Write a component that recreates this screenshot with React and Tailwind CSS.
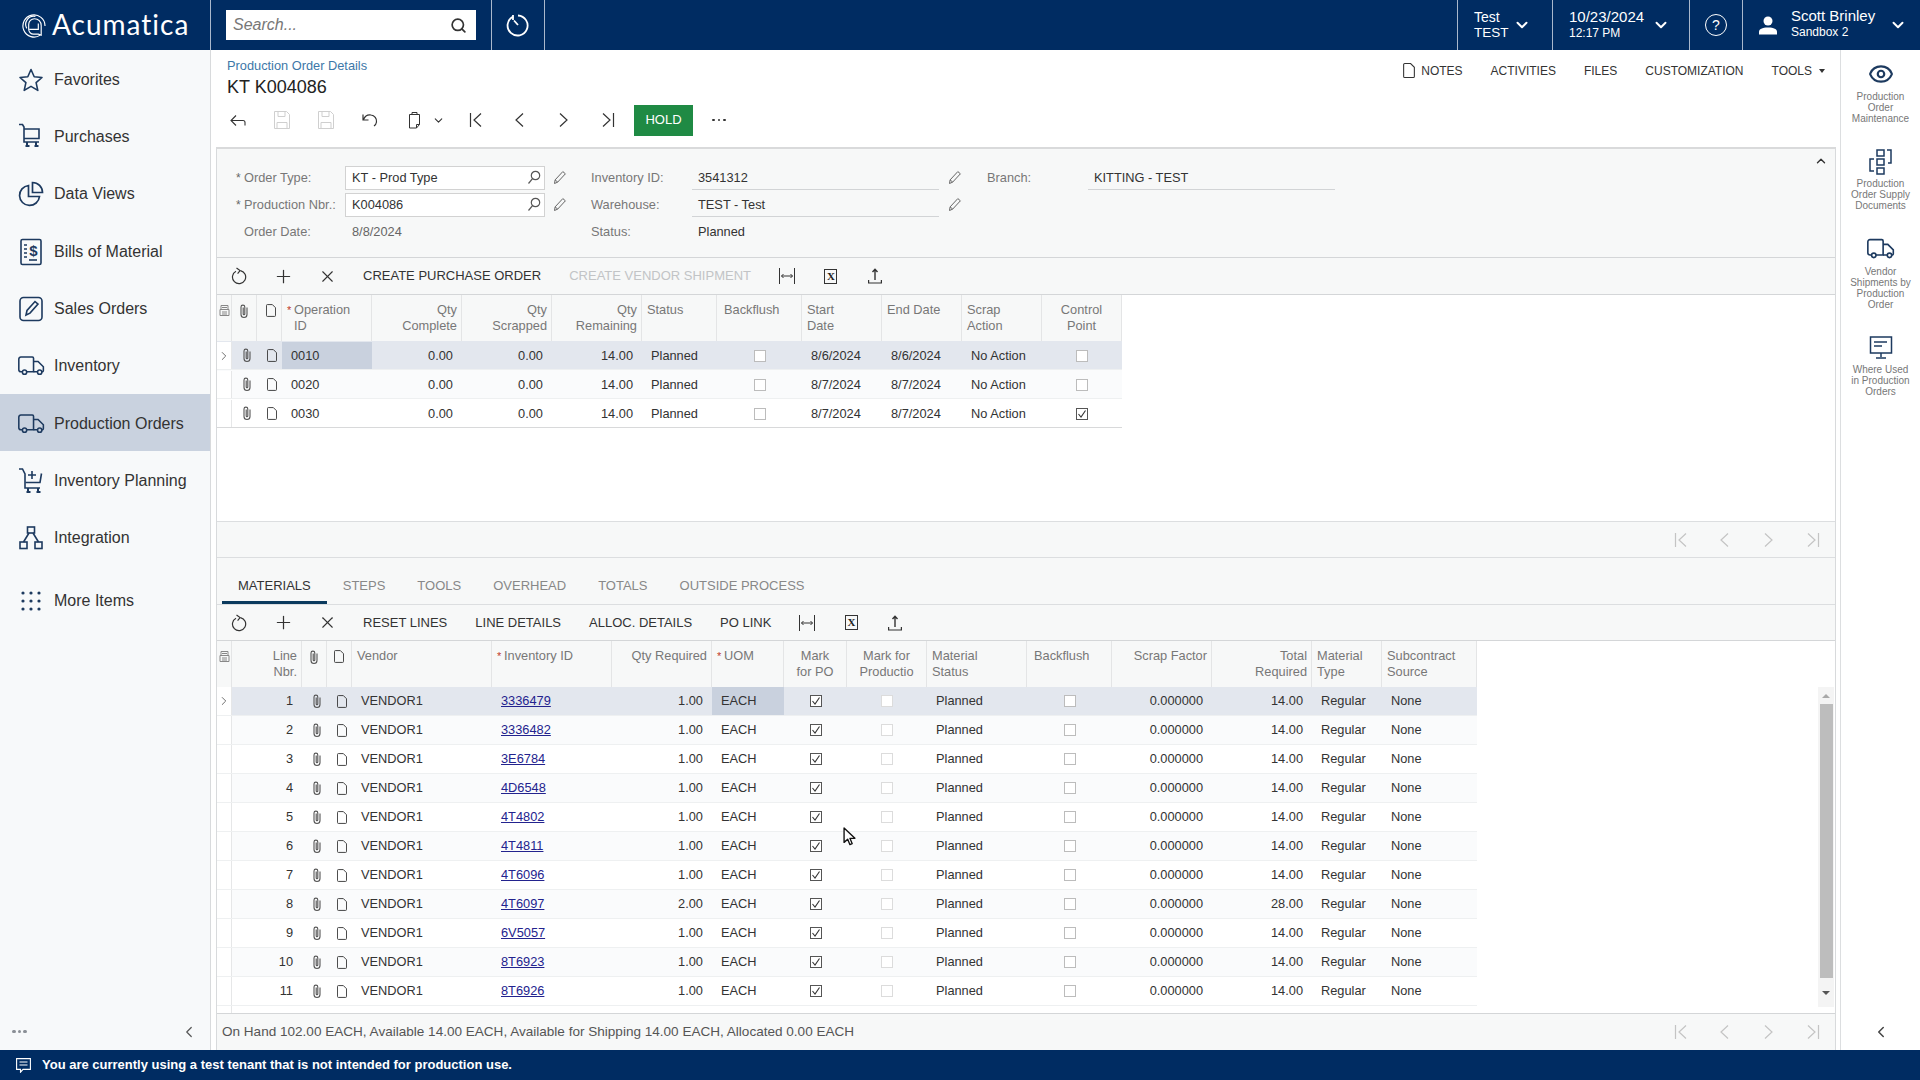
import React from "react";
import { Search, ChevronDown, ChevronLeft, ChevronRight, ChevronUp, Plus, X, Eye } from "lucide-react";

const navy = "#1d3a5f";

const Star = () => (
  <svg width="26" height="26" viewBox="0 0 26 26" fill="none" stroke={navy} strokeWidth="1.6" strokeLinejoin="round">
    <path d="M13 2.500l3.200 7.200 7.800.8-5.900 5.200 1.700 7.700-6.800-4-6.800 4 1.700-7.700L2 10.500l7.800-.8z" />
  </svg>
);
const Cart = () => (
  <svg width="26" height="28" viewBox="0 0 26 28" fill="none" stroke={navy} strokeWidth="1.6">
    <path d="M1 1.500h3.500l1.500 2.500V19h15M6 6h15v9.500H6" />
    <path d="M9 19v4M18 19v4M7.500 23h4M16.500 23h4" strokeWidth="2" />
  </svg>
);
const Pie = () => (
  <svg width="26" height="26" viewBox="0 0 26 26" fill="none" stroke={navy} strokeWidth="1.7">
    <path d="M10.500 4.500a10 10 0 1 0 11 11h-11z" />
    <path d="M14.500 1.500a10 10 0 0 1 10 10h-10z" />
  </svg>
);
const Bill = () => (
  <svg width="26" height="28" viewBox="0 0 26 28" fill="none" stroke={navy} strokeWidth="1.6">
    <rect x="3" y="1.500" width="20" height="25" rx="1.500" />
    <path d="M6 7h3M6 11h3M6 15h3M6 19h3" />
    <text x="15.500" y="18" textAnchor="middle" fontSize="15" fontWeight="700" fill={navy} stroke="none" fontFamily="Liberation Sans">$</text>
    <path d="M11 22h8" />
  </svg>
);
const Sales = () => (
  <svg width="26" height="28" viewBox="0 0 26 28" fill="none" stroke={navy} strokeWidth="1.6">
    <rect x="2" y="2.500" width="22" height="23" rx="3.500" />
    <path d="M8 20l1-4.500 8-9 3 2.600-8 9z" />
  </svg>
);
const Truck = ({ c = navy, w = 27, h = 20 }) => (
  <svg width={w} height={h} viewBox="0 0 33 24" fill="none" stroke={c} strokeWidth="1.900">
    <path d="M5.500 19H3.500a2.500 2.500 0 0 1-2.500-2.500V3.500A2.500 2.500 0 0 1 3.500 1h14a1.500 1.500 0 0 1 1.500 1.500V19H10.500" />
    <path d="M19 6.500h5.500l6.500 6.500v4.500a1.500 1.500 0 0 1-1.500 1.500H29M24 19h-5" />
    <circle cx="8" cy="19.500" r="2.600" />
    <circle cx="26.500" cy="19.500" r="2.600" />
  </svg>
);
const CartPlus = () => (
  <svg width="26" height="26" viewBox="0 0 26 26" fill="none" stroke={navy} strokeWidth="1.6">
    <path d="M1 1h3.500l2.500 5v14h15" />
    <path d="M7.500 14.500h14.500l1.500-9" />
    <path d="M14 3v8M10 7h8" />
    <path d="M10 20v4M20 20v4M8.500 24h4M18.500 24h4" strokeWidth="2" />
  </svg>
);
const Hier = () => (
  <svg width="26" height="26" viewBox="0 0 26 26" fill="none" stroke={navy} strokeWidth="1.6">
    <rect x="9.500" y="2" width="7" height="6" />
    <rect x="2" y="17" width="7" height="6.500" />
    <rect x="17" y="17" width="7" height="6.500" />
    <path d="M11 8l-5.500 9M15 8l5.500 9" />
  </svg>
);
const Dots = () => (
  <svg width="20" height="20" viewBox="0 0 20 20" fill={navy}>
    {[2, 10, 18].map((y) => [2, 10, 18].map((x) => <circle key={x + "-" + y} cx={x} cy={y} r="1.600" />))}
  </svg>
);
const Clip = () => (
  <svg width="10" height="15" viewBox="0 0 10 15" fill="none" stroke="#555" strokeWidth="1.100">
    <path d="M8 3.500V10.500a3 3 0 0 1-6 0V3a1.900 1.900 0 0 1 3.800 0v7a.8.8 0 0 1-1.600 0V3.500" />
  </svg>
);
const Doc = ({ c = "#333", w = 10, h = 13 }) => (
  <svg width={w} height={h} viewBox="0 0 11 14" fill="none" stroke={c} strokeWidth="1">
    <path d="M1.500.5h5.500l3.500 3.500v8.500a1 1 0 0 1-1 1H1.500a1 1 0 0 1-1-1V1.500a1 1 0 0 1 1-1z" />
  </svg>
);
const ListIco = () => (
  <svg width="11" height="13" viewBox="0 0 11 13" fill="none" stroke="#888" strokeWidth="1">
    <path d="M2 1.500h7v4H2zM1 5.500h9v6H1zM3 3.500h5M3 8h5M3 10h5" />
  </svg>
);
const Pencil = () => (
  <svg width="14" height="15" viewBox="0 0 14 15" fill="none" stroke="#666" strokeWidth="1">
    <path d="M1.500 13.500l.6-3.600L9.800 1.600l2.600 2.200-7.700 8.300zM2.100 9.900l2.600 2.200" />
  </svg>
);
const MiniSearch = () => (
  <svg width="14" height="15" viewBox="0 0 14 15" fill="none" stroke="#555" strokeWidth="1.200">
    <circle cx="8.500" cy="5.500" r="4.200" />
    <path d="M5.500 8.600L1.500 13.500" />
  </svg>
);
const Refresh = () => (
  <svg width="16" height="18" viewBox="0 0 16 18" fill="none" stroke="#333" strokeWidth="1.200">
    <path d="M5 4.200a6.600 6.600 0 1 0 4.500-.6" />
    <path d="M5.500 1l3.600 2.600-2.500 3" />
  </svg>
);
const Fit = ({ w = 16 }) => (
  <svg width={w} height="16" viewBox="0 0 16 16" fill="none" stroke="#333" strokeWidth="1">
    <path d="M.5 0v16M15.500 0v16M2.500 8h11M4.500 6l-2 2 2 2M11.500 6l2 2-2 2" />
  </svg>
);
const Excel = () => (
  <div className="w-[13px] h-[15px] border border-[#333] flex items-center justify-center text-[11px] leading-none font-bold text-[#222] font-['Liberation_Serif',serif]">X</div>
);
const Upload = () => (
  <svg width="14" height="16" viewBox="0 0 14 16" fill="none" stroke="#333" strokeWidth="1.200">
    <path d="M7 12V1.500M4.500 4L7 1.200 9.500 4" strokeWidth="1.400" />
    <path d="M.6 12v3h12.800v-3" />
  </svg>
);
const PagerIcon = ({ kind }) => {
  const d = {
    first: "M1.500 1v14M12 1.500L5 8l7 6.500",
    prev: "M10 1.500L3 8l7 6.500",
    next: "M3 1.500L10 8l-7 6.500",
    last: "M12.500 1v14M2 1.500L9 8l-7 6.500",
  }[kind];
  return (
    <svg width="14" height="16" viewBox="0 0 14 16" fill="none" stroke="currentColor" strokeWidth="1.200"><path d={d} /></svg>
  );
};
const Pager = () => (
  <div className="flex ml-auto text-[#c4c4c4]">
    {["first", "prev", "next", "last"].map((k) => (
      <div key={k} className="w-[44px] flex items-center justify-center"><PagerIcon kind={k} /></div>
    ))}
  </div>
);

const Box = ({ checked, soft }) => (
  <div className={"w-[12px] h-[12px] border bg-white flex items-center justify-center " + (checked ? "border-[#555]" : soft ? "border-[#dcdcdc]" : "border-[#bcbcbc]")}>
    {checked && (
      <svg width="10" height="10" viewBox="0 0 10 10" fill="none" stroke="#333" strokeWidth="1.100"><path d="M1.500 5l2.500 3 4.500-6.500" /></svg>
    )}
  </div>
);

const Logo = () => (
  <svg width="25" height="25" viewBox="0 0 26 26" fill="none" stroke="#fff" strokeWidth="1.200">
    <path d="M20 23a11.500 11.500 0 1 1 5-9.500" />
    <path d="M6 16a8.500 8.500 0 0 1 9-12.500" />
    <path d="M8 15v-3a6 6 0 0 1 6-6c4 0 7 3 7 7v10l-3-1H13a5 5 0 0 1-5-5z" />
    <path d="M8.500 17H18V11" />
  </svg>
);

const NAV = [
  ["Favorites", <Star />],
  ["Purchases", <Cart />],
  ["Data Views", <Pie />],
  ["Bills of Material", <Bill />],
  ["Sales Orders", <Sales />],
  ["Inventory", <Truck />],
  ["Production Orders", <Truck />, true],
  ["Inventory Planning", <CartPlus />],
  ["Integration", <Hier />],
];

const Sidebar = () => (
  <aside className="w-[211px] shrink-0 border-r border-[#d8dadc] bg-[#f7f9fa] flex flex-col">
    {NAV.map(([t, ic, active]) => (
      <div key={t} className={"flex items-center h-[57.33px] pl-[18px] pt-[2px] " + (active ? "bg-[#c9d2df]" : "")}>
        <div className="w-[36px] flex items-center">{ic}</div>
        <span className="text-[16px] text-[#333]">{t}</span>
      </div>
    ))}
    <div className="flex items-center h-[57.33px] pl-[18px] mt-[5px] pt-[2px]">
      <div className="w-[36px] pl-[3px] flex items-center"><Dots /></div>
      <span className="text-[16px] text-[#333]">More Items</span>
    </div>
    <div className="mt-auto h-[37px] flex items-center justify-between pl-[12px] pr-[12px]">
      <div className="flex gap-[2px]">
        {[0, 1, 2].map((i) => <div key={i} className="w-[3.5px] h-[3.5px] rounded-full bg-[#8a8f96]" />)}
      </div>
      <ChevronLeft size={18} strokeWidth={1.6} className="text-[#555]" />
    </div>
  </aside>
);

const TopBar = () => (
  <header className="h-[50px] shrink-0 bg-[#002c62] flex text-white">
    <div className="w-[211px] shrink-0 border-r border-[#a9b8cc] flex items-center pl-[21px]">
      <Logo />
      <span className="ml-[6px] -mt-[2px] text-[28px] tracking-[1px] leading-none font-['Lato',sans-serif]">Acumatica</span>
    </div>
    <div className="w-[281px] border-r border-[#a9b8cc] flex items-center pl-[15px]">
      <div className="w-[250px] h-[30px] bg-white flex items-center justify-between px-[7px]">
        <span className="text-[16px] italic text-[#777]">Search...</span>
        <Search size={17} strokeWidth={2.4} className="text-[#333] -translate-x-[2px]" />
      </div>
    </div>
    <div className="w-[53px] border-r border-[#a9b8cc] flex items-center justify-center">
      <svg width="24" height="24" viewBox="0 0 24 24" fill="none" stroke="#fff" strokeWidth="1.800">
        <path d="M7 3.600a10 10 0 1 0 5-1.100" />
        <path d="M7 2v5h0M12 12L8 7.500" />
      </svg>
    </div>
    <div className="ml-auto flex">
      <div className="w-[95px] border-l border-[#a9b8cc] flex items-center pl-[16px]">
        <div className="w-[42px]">
          <div className="text-[14px] leading-[15px]">Test</div>
          <div className="text-[13.5px] leading-[16px]">TEST</div>
        </div>
        <ChevronDown size={18} strokeWidth={2.6} className="-ml-[3px]" />
      </div>
      <div className="w-[137px] border-l border-[#a9b8cc] flex items-center pl-[16px]">
        <div className="w-[84px]">
          <div className="text-[15px] leading-[17px]">10/23/2024</div>
          <div className="text-[12px] leading-[17px]">12:17 PM</div>
        </div>
        <ChevronDown size={18} strokeWidth={2.6} className="-ml-[1px]" />
      </div>
      <div className="w-[53px] border-l border-[#a9b8cc] flex items-center justify-center">
        <div className="w-[22px] h-[22px] rounded-full border-[1.5px] border-white flex items-center justify-center text-[14px] leading-none">?</div>
      </div>
      <div className="w-[178px] border-l border-[#a9b8cc] flex items-center pl-[15px]">
        <svg width="20" height="19" viewBox="0 0 20 19" fill="#fff">
          <circle cx="10" cy="5" r="4.500" />
          <path d="M1 18.500v-2.500c0-3 3-4.500 9-4.500s9 1.500 9 4.500v2.500z" />
        </svg>
        <div className="ml-[13px] w-[95px] -mt-[2px]">
          <div className="text-[15px] leading-[17px] whitespace-nowrap">Scott Brinley</div>
          <div className="text-[12px] leading-[17px]">Sandbox 2</div>
        </div>
        <ChevronDown size={18} strokeWidth={2.6} className="ml-[3px]" />
      </div>
    </div>
  </header>
);

const IconBtn = ({ children, w = "w-[44px]" }) => (
  <div className={w + " h-[44px] flex items-center justify-center shrink-0 text-[#333]"}>{children}</div>
);

const MainHeader = () => (
  <div className="h-[97px] shrink-0 flex flex-col">
    <div className="flex justify-between h-[48px] pt-[8px]">
      <div className="pl-[16px]">
        <div className="text-[12.8px] leading-[16px] text-[#3d77a8]">Production Order Details</div>
        <div className="text-[18px] leading-[22px] mt-[2px] text-[#222]">KT K004086</div>
      </div>
      <div className="flex items-center h-[16px] mt-[4.5px] gap-[28px] pr-[15px] text-[12px] text-[#333]">
        <div className="flex items-center gap-[6px]"><Doc w={12} h={15} /><span>NOTES</span></div>
        <span>ACTIVITIES</span>
        <span>FILES</span>
        <span>CUSTOMIZATION</span>
        <div className="flex items-center gap-[7px]"><span>TOOLS</span><div className="w-0 h-0 border-x-[3.5px] border-x-transparent border-t-[4px] border-t-[#333]" /></div>
      </div>
    </div>
    <div className="flex items-center pl-[5px] h-[44px]">
      <IconBtn><svg width="16" height="14" viewBox="0 0 16 14" fill="none" stroke="#333" strokeWidth="1.100"><path d="M15 12.500V9.500a2 2 0 0 0-2-2H1.500M6 2.500L1 7.500l5 5" /></svg></IconBtn>
      <IconBtn><svg width="16" height="18" viewBox="0 0 16 18" fill="none" stroke="#cfcfcf" strokeWidth="1"><path d="M.5.5h12l3 3v14H.5zM4 .5v5h7v-5M3 17.500v-6h10v6" /></svg></IconBtn>
      <IconBtn><svg width="16" height="18" viewBox="0 0 16 18" fill="none" stroke="#cfcfcf" strokeWidth="1"><path d="M.5.5h12l3 3v14H.5zM4 .5v5h7v-5M3 17.500v-6h10v6" /></svg></IconBtn>
      <IconBtn><svg width="16" height="14" viewBox="0 0 16 14" fill="none" stroke="#333" strokeWidth="1.200"><path d="M1 1.500V7h5.500M1.500 6.500C3 3 6 1.500 9 2c3.500.5 6 3.500 5.500 7-.2 1.500-1 3-2.500 4" /></svg></IconBtn>
      <IconBtn><svg width="13" height="18" viewBox="0 0 13 18" fill="none" stroke="#333" strokeWidth="1"><path d="M1.500 3.500h10v10l-3 3.500h-7zM8.500 17v-3.500h3M4 3.500V1.500h5v2" /></svg></IconBtn>
      <div className="w-[18px] -ml-[7px] mr-[7px] flex justify-center"><ChevronDown size={13} strokeWidth={2} className="text-[#333]" /></div>
      {["first", "prev", "next", "last"].map((k) => <IconBtn key={k}><PagerIcon kind={k} /></IconBtn>)}
      <div className="ml-[4px] w-[59px] h-[31px] bg-[#1f8a44] text-white text-[13px] flex items-center justify-center">HOLD</div>
      <div className="ml-[4px] w-[44px] flex justify-center gap-[3px]">
        {[0, 1, 2].map((i) => <div key={i} className="w-[2.5px] h-[2.5px] rounded-full bg-[#333]" />)}
      </div>
    </div>
  </div>
);

const Label = ({ req, children, w }) => (
  <div className={w + " flex items-center text-[#777] text-[12.8px] shrink-0"}>
    {req !== undefined && <span className="w-[8px] -ml-[1px] text-[#666] text-[12px] leading-none">{req ? "*" : ""}</span>}
    <span>{children}</span>
  </div>
);

const SelectorInput = ({ value }) => (
  <>
    <div className="w-[200px] h-[24px] bg-white border border-[#d2d2d2] flex items-center justify-between pl-[6px] pr-[3px] text-[12.8px] text-[#333]">
      <span>{value}</span>
      <MiniSearch />
    </div>
    <div className="ml-[8px]"><Pencil /></div>
  </>
);

const Under = ({ children }) => (
  <div className="w-[247px] h-[24px] pt-[2px] border-b border-[#d2d4d6] flex items-center pl-[6px] text-[12.8px] text-[#333]">{children}</div>
);

const FormPanel = () => (
  <div className="relative h-[111px] shrink-0 bg-[#f7f8f8] border-t-2 border-t-[#d9dadb] border-b border-b-[#d4d6d8] pt-[15px] flex">
    <div className="w-[374px] pl-[20px] shrink-0">
      <div className="flex items-center h-[27px]"><Label req w="w-[108px]">Order Type:</Label><SelectorInput value="KT - Prod Type" /></div>
      <div className="flex items-center h-[27px]"><Label req w="w-[108px]">Production Nbr.:</Label><SelectorInput value="K004086" /></div>
      <div className="flex items-center h-[27px]"><Label req={false} w="w-[108px]">Order Date:</Label><span className="pl-[7px] text-[12.8px] text-[#666]">8/8/2024</span></div>
    </div>
    <div className="w-[396px] shrink-0">
      <div className="flex items-center h-[27px]"><Label w="w-[101px]">Inventory ID:</Label><Under>3541312</Under><div className="ml-[9px]"><Pencil /></div></div>
      <div className="flex items-center h-[27px]"><Label w="w-[101px]">Warehouse:</Label><Under>TEST - Test</Under><div className="ml-[9px]"><Pencil /></div></div>
      <div className="flex items-center h-[27px]"><Label w="w-[101px]">Status:</Label><span className="pl-[6px] text-[12.8px] text-[#333]">Planned</span></div>
    </div>
    <div className="w-[396px] shrink-0">
      <div className="flex items-center h-[27px]"><Label w="w-[101px]">Branch:</Label><Under>KITTING - TEST</Under></div>
    </div>
    <ChevronUp size={14} strokeWidth={2.4} className="absolute right-[7px] top-[5px] text-[#333]" />
  </div>
);

const GridToolbar = ({ actions, h = "h-[37px]" }) => (
  <div className={h + " shrink-0 bg-[#f7f8f8] border-b border-[#d4d6d8] flex items-center text-[13px] text-[#333]"}>
    <IconBtn><Refresh /></IconBtn>
    <IconBtn><Plus size={21} strokeWidth={1.4} /></IconBtn>
    <IconBtn><X size={19} strokeWidth={1.4} /></IconBtn>
    {actions.map(([t, dis]) => (
      <div key={t} className={"px-[14px] whitespace-nowrap " + (dis ? "text-[#c2c4c6]" : "")}>{t}</div>
    ))}
    <IconBtn><Fit /></IconBtn>
    <IconBtn><Excel /></IconBtn>
    <IconBtn><Upload /></IconBtn>
  </div>
);

const Th = ({ w, align = "l", req, pad = "", children }) => (
  <div className={w + " shrink-0 border-r border-[#e4e5e6] pt-[7px] text-[12.8px] leading-[16px] text-[#777] whitespace-pre-line overflow-hidden " +
    (align === "r" ? "text-right pr-[4px]" : align === "c" ? "text-center" : "pl-[5px] flex ") + " " + pad}>
    {req && <span className="w-[7px] shrink-0 text-[#c0392b] text-[11px]">*</span>}
    <span>{children}</span>
  </div>
);

const Td = ({ w, align = "l", bg = "", children }) => (
  <div className={w + " shrink-0 h-full flex items-center overflow-hidden whitespace-nowrap " + bg + " " +
    (align === "r" ? "justify-end pr-[9px]" : align === "c" ? "justify-center" : "pl-[9px]")}>{children}</div>
);

const Ico = ({ w, children }) => (
  <div className={w + " shrink-0 h-full flex items-center justify-center pl-[4px]"}>{children}</div>
);

const Strip = ({ arrow }) => (
  <div className="w-[15px] shrink-0 h-full bg-white border-r border-[#e6e7e8] flex items-center justify-center">
    {arrow && <ChevronRight size={14} strokeWidth={1.6} className="text-[#666]" />}
  </div>
);

const OPS = [
  ["0010", "8/6/2024", "8/6/2024", false],
  ["0020", "8/7/2024", "8/7/2024", false],
  ["0030", "8/7/2024", "8/7/2024", true],
];

const UpperGrid = () => (
  <div className="h-[226px] shrink-0 flex flex-col bg-white">
    <div className="flex h-[46px] w-[905px] bg-[#f7f8f8] shrink-0">
      <div className="w-[15px] shrink-0 border-r border-[#e4e5e6] flex justify-center pt-[9px]"><ListIco /></div>
      <div className="w-[25px] shrink-0 border-r border-[#e4e5e6] flex justify-center pt-[9px]"><Clip /></div>
      <div className="w-[25px] shrink-0 border-r border-[#e4e5e6] flex justify-center pt-[9px] pl-[3px]"><Doc /></div>
      <Th w="w-[90px]" req>{"Operation\nID"}</Th>
      <Th w="w-[90px]" align="r">{"Qty\nComplete"}</Th>
      <Th w="w-[90px]" align="r">{"Qty\nScrapped"}</Th>
      <Th w="w-[90px]" align="r">{"Qty\nRemaining"}</Th>
      <Th w="w-[75px]">Status</Th>
      <Th w="w-[85px]" pad="pl-[7px]">Backflush</Th>
      <Th w="w-[80px]">{"Start\nDate"}</Th>
      <Th w="w-[80px]">End Date</Th>
      <Th w="w-[80px]">{"Scrap\nAction"}</Th>
      <Th w="w-[80px]" align="c">{"Control\nPoint"}</Th>
    </div>
    {OPS.map(([id, s, e, cp], i) => (
      <div key={id} className={"flex h-[29px] pt-[1px] w-[905px] text-[12.8px] text-[#333] border-b " + (i === 2 ? "border-[#d8d9da] " : "border-[#eef0f1] ") + (i === 0 ? "bg-[#e3e7ee]" : i === 1 ? "bg-[#fafbfc]" : "bg-white")}>
        <Strip arrow={i === 0} />
        <Ico w="w-[25px]"><Clip /></Ico>
        <Ico w="w-[25px]"><Doc /></Ico>
        <Td w="w-[90px]" bg={i === 0 ? "bg-[#c9d1de]" : ""}>{id}</Td>
        <Td w="w-[90px]" align="r">0.00</Td>
        <Td w="w-[90px]" align="r">0.00</Td>
        <Td w="w-[90px]" align="r">14.00</Td>
        <Td w="w-[75px]">Planned</Td>
        <Td w="w-[85px]" align="c"><Box /></Td>
        <Td w="w-[80px]">{s}</Td>
        <Td w="w-[80px]">{e}</Td>
        <Td w="w-[80px]">No Action</Td>
        <Td w="w-[80px]" align="c"><Box checked={cp} /></Td>
      </div>
    ))}
  </div>
);

const MATS = ["3336479", "3336482", "3E6784", "4D6548", "4T4802", "4T4811", "4T6096", "4T6097", "6V5057", "8T6923", "8T6926"];

const LowerGrid = () => (
  <div className="h-[372px] shrink-0 flex bg-white">
    <div className="w-[1260px] shrink-0 flex flex-col">
      <div className="flex h-[46px] bg-[#f7f8f8] shrink-0">
        <div className="w-[15px] shrink-0 border-r border-[#e4e5e6] flex justify-center pt-[9px]"><ListIco /></div>
        <Th w="w-[70px]" align="r">{"Line\nNbr."}</Th>
        <div className="w-[25px] shrink-0 border-r border-[#e4e5e6] flex justify-center pt-[9px]"><Clip /></div>
        <div className="w-[25px] shrink-0 border-r border-[#e4e5e6] flex justify-center pt-[9px]"><Doc /></div>
        <Th w="w-[140px]">Vendor</Th>
        <Th w="w-[120px]" req>Inventory ID</Th>
        <Th w="w-[100px]" align="r">Qty Required</Th>
        <Th w="w-[72px]" req>UOM</Th>
        <Th w="w-[63px]" align="c">{"Mark\nfor PO"}</Th>
        <Th w="w-[80px]" align="c">{"Mark for\nProductio"}</Th>
        <Th w="w-[100px]" pad="pl-[4px]">{"Material\nStatus"}</Th>
        <Th w="w-[85px]" pad="pl-[7px]">Backflush</Th>
        <Th w="w-[100px]" align="r">Scrap Factor</Th>
        <Th w="w-[100px]" align="r">{"Total\nRequired"}</Th>
        <Th w="w-[70px]" pad="pl-[4px]">{"Material\nType"}</Th>
        <Th w="w-[95px]">{"Subcontract\nSource"}</Th>
      </div>
      {MATS.map((m, i) => (
        <div key={m} className={"flex h-[29px] shrink-0 text-[12.8px] text-[#333] border-b border-[#eef0f1] " + (i === 0 ? "bg-[#e3e7ee]" : i % 2 ? "bg-[#fafbfc]" : "bg-white")}>
          <Strip arrow={i === 0} />
          <Td w="w-[70px]" align="r">{i + 1}</Td>
          <Ico w="w-[25px]"><Clip /></Ico>
          <Ico w="w-[25px]"><Doc /></Ico>
          <Td w="w-[140px]">VENDOR1</Td>
          <Td w="w-[120px]"><span className="text-[#23238e] underline">{m}</span></Td>
          <Td w="w-[100px]" align="r">{i === 7 ? "2.00" : "1.00"}</Td>
          <Td w="w-[72px]" bg={i === 0 ? "bg-[#c9d1de]" : ""}>EACH</Td>
          <Td w="w-[63px]" align="c"><Box checked /></Td>
          <Td w="w-[80px]" align="c"><Box soft /></Td>
          <Td w="w-[100px]">Planned</Td>
          <Td w="w-[85px]" align="c"><Box /></Td>
          <Td w="w-[100px]" align="r">0.000000</Td>
          <Td w="w-[100px]" align="r">{i === 7 ? "28.00" : "14.00"}</Td>
          <Td w="w-[70px]">Regular</Td>
          <Td w="w-[95px]">None</Td>
        </div>
      ))}
      <div className="w-[15px] flex-1 border-r border-[#e6e7e8]" />
    </div>
    <div className="ml-auto mr-[1px] mt-[46px] w-[16px] h-[320px] bg-[#f4f4f4] flex flex-col items-center">
      <div className="h-[17px] flex items-center justify-center">
        <div className="w-0 h-0 border-x-[4px] border-x-transparent border-b-[4px] border-b-[#a8a8a8]" />
      </div>
      <div className="w-[13px] h-[274px] bg-[#bdbdbd]" />
      <div className="flex-1 flex items-center justify-center">
        <div className="w-0 h-0 border-x-[4px] border-x-transparent border-t-[4px] border-t-[#555]" />
      </div>
    </div>
  </div>
);

const TABS = ["MATERIALS", "STEPS", "TOOLS", "OVERHEAD", "TOTALS", "OUTSIDE PROCESS"];

const Tabs = () => (
  <div className="h-[47px] shrink-0 bg-[#f7f8f8] border-b border-[#dcdee0] flex pl-[5px] text-[13px]">
    {TABS.map((t, i) => (
      <div key={t} className={"px-[16px] pt-[12px] flex items-center border-b-[3px] " + (i === 0 ? "border-[#0b3a5e] text-[#333]" : "border-transparent text-[#888]")}>{t}</div>
    ))}
  </div>
);

const RAIL = [
  ["Production\nOrder\nMaintenance", <Eye size={26} strokeWidth={2} color={navy} />],
  ["Production\nOrder Supply\nDocuments", (
    <svg width="24" height="26" viewBox="0 0 24 26" fill="none" stroke={navy} strokeWidth="1.500">
      <rect x="8" y="1" width="7" height="6" /><rect x="8" y="10" width="7" height="6" /><rect x="8" y="19" width="7" height="6" />
      <path d="M18 1h4v13h-3M5 10H1v12h4" />
    </svg>
  )],
  ["Vendor\nShipments by\nProduction\nOrder", <Truck w={28} h={22} />],
  ["Where Used\nin Production\nOrders", (
    <svg width="24" height="24" viewBox="0 0 24 24" fill="none" stroke={navy} strokeWidth="1.500">
      <rect x="1.500" y="1" width="21" height="16" />
      <path d="M5 6h13M5 10h8M12 17v4M7 22h10" />
    </svg>
  )],
];

const RightRail = () => (
  <aside className="w-[80px] shrink-0 border-l border-[#dcdee0] bg-white flex flex-col">
    <div className="pt-[10px] flex flex-col gap-[24px]">
      {RAIL.map(([t, ic]) => (
        <div key={t} className="flex flex-col items-center">
          <div className="h-[28px] flex items-center justify-center">{ic}</div>
          <div className="mt-[2.5px] text-[10px] leading-[11px] text-[#777] text-center whitespace-pre-line">{t}</div>
        </div>
      ))}
    </div>
    <div className="mt-auto h-[37px] flex items-center justify-center">
      <ChevronLeft size={18} strokeWidth={2} className="text-[#444]" />
    </div>
  </aside>
);

export default function App() {
  return (
    <div className="relative w-[1920px] h-[1080px] overflow-hidden flex flex-col bg-white font-['Liberation_Sans',Arial,sans-serif]">
      <TopBar />
      <div className="h-[1000px] flex">
        <Sidebar />
        <main className="flex-1 min-w-0 flex flex-col">
          <MainHeader />
          <div className="ml-[5px] mr-[4px] flex-1 border-x border-[#d8dadc] flex flex-col">
            <FormPanel />
            <GridToolbar actions={[["CREATE PURCHASE ORDER"], ["CREATE VENDOR SHIPMENT", true]]} />
            <UpperGrid />
            <div className="h-[37px] shrink-0 bg-[#f7f8f8] border-y border-[#dcdee0] flex"><Pager /></div>
            <Tabs />
            <GridToolbar actions={[["RESET LINES"], ["LINE DETAILS"], ["ALLOC. DETAILS"], ["PO LINK"]]} h="h-[36px]" />
            <LowerGrid />
            <div className="flex-1 bg-[#f7f8f8] border-t border-[#d4d6d8] flex items-center pl-[5px] text-[13.55px] text-[#555]">
              <span>On Hand 102.00 EACH, Available 14.00 EACH, Available for Shipping 14.00 EACH, Allocated 0.00 EACH</span>
              <Pager />
            </div>
          </div>
        </main>
        <RightRail />
      </div>
      <div className="h-[30px] shrink-0 bg-[#002c62] flex items-center pl-[16px] text-white">
        <svg width="15" height="15" viewBox="0 0 15 15" fill="none" stroke="#fff" strokeWidth="1.100">
          <path d="M.6.6h13.800v10.800H7l-2.500 2.800v-2.800H.6zM3.500 4h8M3.500 7h8" />
        </svg>
        <span className="ml-[11px] text-[13px] font-bold">You are currently using a test tenant that is not intended for production use.</span>
      </div>
      <svg className="absolute left-[843px] top-[827px]" width="13" height="19" viewBox="0 0 14 21">
        <path d="M1 1v16l4-3.500 2.500 6 2.500-1-2.500-6H13z" fill="#fff" stroke="#111" strokeWidth="1.500" strokeLinejoin="round" />
      </svg>
    </div>
  );
}
